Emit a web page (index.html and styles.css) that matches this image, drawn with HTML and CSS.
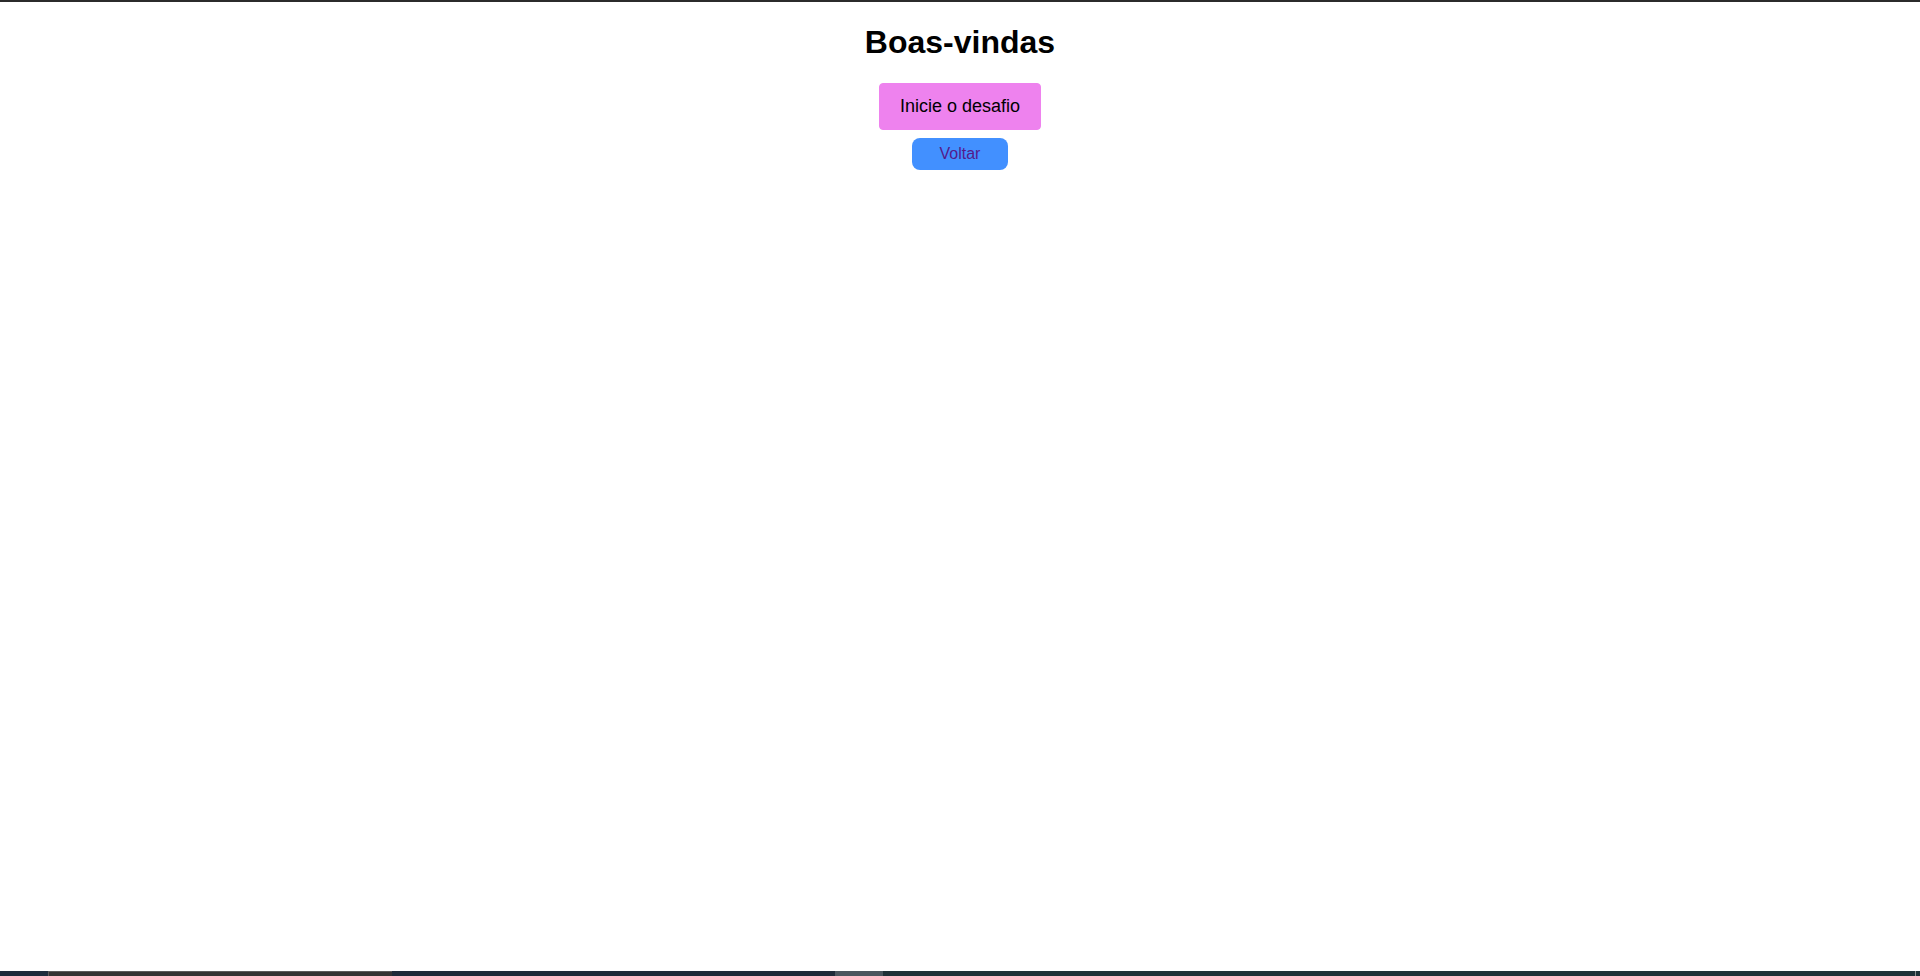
FILE: index.html
```html
<!DOCTYPE html>
<html lang="pt-BR">
<head>
<meta charset="utf-8">
<title>Boas-vindas</title>
<link rel="stylesheet" href="styles.css">
</head>
<body>
<div class="topline"></div>
<main class="page">
  <h1 class="title">Boas-vindas</h1>
  <button class="start-btn" type="button">Inicie o desafio</button>
  <a class="back-btn" href="#">Voltar</a>
</main>
<div class="taskbar">
  <span class="seg seg-a"></span>
  <span class="seg seg-b"></span>
  <span class="seg seg-c"></span>
  <span class="seg seg-d"></span>
  <span class="seg seg-e"></span>
  <span class="seg seg-f"></span>
  <span class="seg seg-g"></span>
</div>
</body>
</html>
```
FILE: styles.css
```css
html, body {
  margin: 0;
  padding: 0;
  height: 100%;
}
body {
  display: flex;
  flex-direction: column;
  background: #ffffff;
  font-family: "Liberation Sans", Arial, sans-serif;
  overflow: hidden;
}
.topline {
  height: 2px;
  background: #2b2b2b;
  flex: none;
}
.page {
  flex: 1;
  display: flex;
  flex-direction: column;
  align-items: center;
}
.title {
  font-size: 32px;
  font-weight: bold;
  margin: 21.5px 0 22px;
  color: #000;
}
.start-btn {
  font-family: "Liberation Sans", Arial, sans-serif;
  font-size: 18px;
  background: #ee82ee;
  color: #000;
  border: 1px solid #ee82ee;
  border-radius: 4px;
  padding: 12px 20px;
  cursor: pointer;
}
.back-btn {
  margin-top: 8px;
  font-size: 16px;
  background: #4290ff;
  color: #551a8b;
  text-decoration: none;
  border-radius: 8px;
  padding: 7px 28px;
}
.taskbar {
  flex: none;
  height: 5px;
  display: flex;
}
.seg { display: block; height: 100%; }
.seg-a { width: 48px; background: #1d2c3c; }
.seg-b { width: 344px; background: #333333; box-shadow: inset 0 1px 0 #5a5a5a, inset 1px 0 0 #5a5a5a; }
.seg-c { width: 443px; background: #1e2b39; }
.seg-d { width: 48px; background: #4a565e; }
.seg-e { flex: 1; background: #1f3137; }
.seg-f { width: 1px; background: #8a9090; }
.seg-g { width: 4px; background: #1f3137; }
```
